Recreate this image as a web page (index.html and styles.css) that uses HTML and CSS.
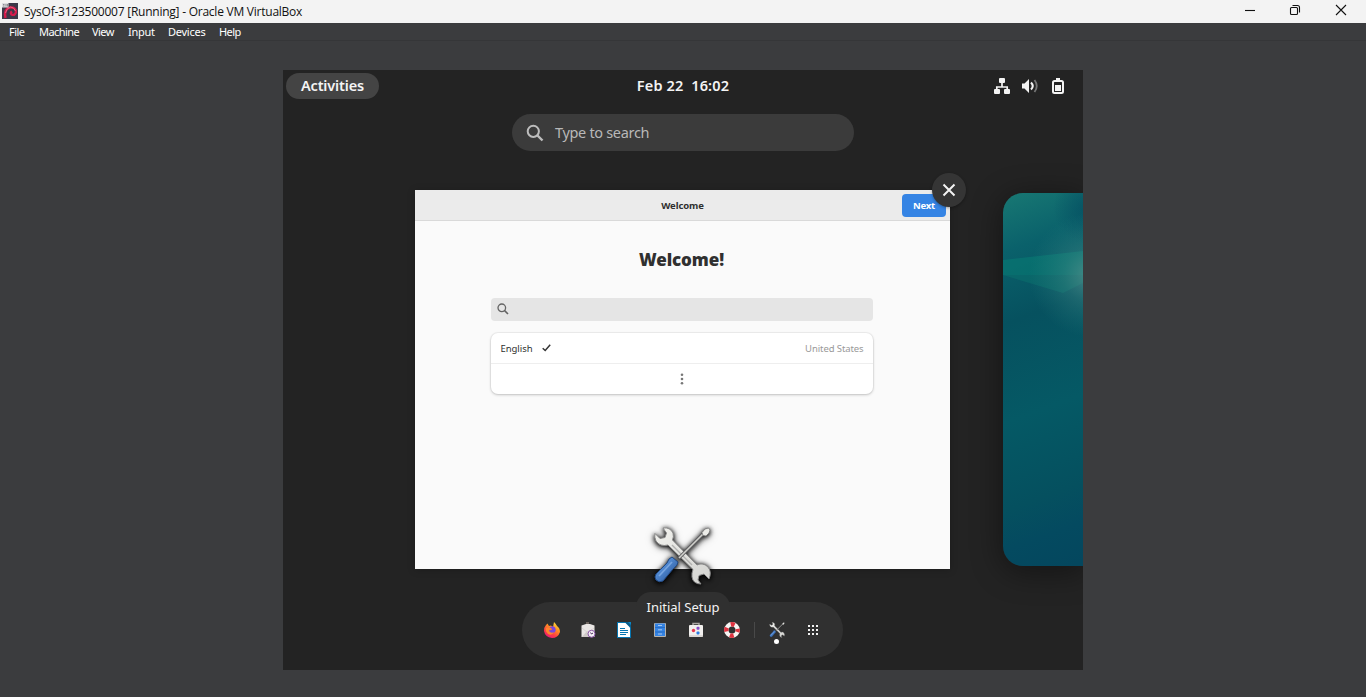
FILE: index.html
```html
<!DOCTYPE html>
<html lang="en">
<head>
<meta charset="utf-8">
<title>SysOf-3123500007 [Running] - Oracle VM VirtualBox</title>
<link rel="stylesheet" href="styles.css">
</head>
<body>
<svg width="0" height="0" class="defs">
  <defs>
    <linearGradient id="steel" x1="0" y1="0" x2="1" y2="1"><stop offset="0" stop-color="#f2f2ee"/><stop offset="1" stop-color="#d2d2cf"/></linearGradient>
    <linearGradient id="handle" x1="0" y1="0" x2="1" y2="1"><stop offset="0" stop-color="#3566ad"/><stop offset=".4" stop-color="#5088d0"/><stop offset="1" stop-color="#234c8c"/></linearGradient>
    <linearGradient id="fire" x1=".9" y1="0" x2=".3" y2="1"><stop offset="0" stop-color="#fff04a"/><stop offset=".4" stop-color="#ff9320"/><stop offset=".75" stop-color="#ff3b45"/><stop offset="1" stop-color="#e8187c"/></linearGradient>
    <symbol id="tools" viewBox="0 0 60 60">
      <path d="M3 7.500 L8 12.500 L13 11.500 L14.500 7 L11 2 Q18 1 21 7 Q22 11 20.500 14 L45 39 Q51 36 56 41 Q60 46 57 53 L52 48 L47 49.500 L46 54 L49 58 Q41 58 40 51 Q39.500 47 41 43.500 L16 19 Q8 21 4 15 Q2 11 3 7.500 Z" fill="url(#steel)" stroke="#8a8a8a" stroke-width="1"/>
      <path d="M20 19 L40 39" stroke="#b2b2b0" stroke-width="1.500"/>
      <path d="M27 32 L52 7" stroke="#5e5e60" stroke-width="3.200"/>
      <path d="M27 32 L52 7" stroke="#d0d0cc" stroke-width="1.600"/>
      <path d="M50 6.500 L53 3 L56.500 2 L58 4 L57 7 L54 10 L51 9.500 Z" fill="#ecece8" stroke="#777" stroke-width=".8"/>
      <path d="M4 48 L15 37 L17 33 L20 31 L26 36 L25 39 L21 43 L11 55 Q7 57 4 54 Q2 51 4 48 Z" fill="url(#handle)" stroke="#234a83" stroke-width="1"/>
      <path d="M7 50 L20 36" stroke="#78a5df" stroke-width="1.800"/>
    </symbol>
  </defs>
</svg>
<header class="titlebar">
  <svg class="app-icon" width="16" height="16" viewBox="0 0 16 16">
    <rect width="16" height="16" fill="#3c3849"/>
    <path d="M3.500 15 Q1.500 6 8 4.500 Q14 4 14 9 Q13 13 9.500 11.500 Q8 10 10 8.500" fill="none" stroke="#d5194b" stroke-width="2.400"/>
    <path d="M3.500 10 Q4 5.500 8.500 4 Q12 4 13.500 8" fill="none" stroke="#f0728e" stroke-width=".8"/>
    <rect width="6.500" height="4.500" fill="#dcdce0"/><path d="M1 1.500h1.500M1 3h1.500M4 1v2.500M5.500 1v2.500" stroke="#77777d" stroke-width=".8"/>
  </svg>
  <span class="title">SysOf-3123500007 [Running] - Oracle VM VirtualBox</span>
  <div class="controls">
    <svg width="12" height="12" viewBox="0 0 12 12"><path d="M1 6.500h10"/></svg>
    <svg width="12" height="12" viewBox="0 0 12 12"><rect x="1.500" y="3.500" width="7" height="7" rx="1"/><path d="M3.500 1.500h5q2 0 2 2v5"/></svg>
    <svg width="12" height="12" viewBox="0 0 12 12"><path d="M1 1l10 10M11 1L1 11"/></svg>
  </div>
</header>
<nav class="menubar"><span class="m-file">File</span><span class="m-machine">Machine</span><span class="m-view">View</span><span class="m-input">Input</span><span class="m-devices">Devices</span><span class="m-help">Help</span></nav>
<main class="viewport">
  <section class="desktop">
    <div class="topbar">
      <div class="activities"><span>Activities</span></div>
      <div class="clock"><span>Feb 22&nbsp; 16:02</span></div>
      <div class="status">
        <svg width="16" height="16" viewBox="0 0 16 16"><path d="M8 4v5M2.800 12V9h10.400v3" fill="none" stroke="#f4f4f4" stroke-width="1.700"/><rect x="5" y="0" width="6" height="5" rx="1"/><rect x="0" y="11" width="6" height="5" rx="1"/><rect x="10" y="11" width="6" height="5" rx="1"/></svg>
        <svg width="16" height="16" viewBox="0 0 16 16"><path d="M0 5.500h2.500L7 1v14L2.500 10.500H0z"/><path d="M9 4.500q3.500 3.500 0 7" fill="none" stroke="#f4f4f4" stroke-width="2"/><path d="M12.500 2q4.500 6 0 12" fill="none" stroke="#777" stroke-width="1.800"/></svg>
        <svg width="16" height="16" viewBox="0 0 16 16"><path d="M6 2V0h4v2" /><rect x="3" y="3" width="10" height="12" rx="1.500" fill="none" stroke="#f4f4f4" stroke-width="2"/><rect x="5" y="7" width="6" height="6"/></svg>
      </div>
    </div>
    <div class="search">
      <svg width="18" height="18" viewBox="0 0 18 18"><circle cx="7.300" cy="7.300" r="5.600" fill="none" stroke="#bdbdbd" stroke-width="2"/><path d="M11.500 11.500l5 5" stroke="#bdbdbd" stroke-width="2.400"/></svg>
      <span>Type to search</span>
    </div>
    <div class="overview">
      <article class="window">
        <div class="headerbar"><span class="head-title">Welcome</span><button class="next"><span>Next</span></button></div>
        <div class="content">
          <h1>Welcome!</h1>
          <div class="lang-search"><svg width="12" height="12" viewBox="0 0 12 12"><circle cx="4.800" cy="4.800" r="3.800" fill="none" stroke="#646464" stroke-width="1.300"/><path d="M7.600 7.600l3.400 3.400" stroke="#646464" stroke-width="1.600"/></svg></div>
          <div class="languages">
            <div class="row"><span class="lang">English</span><svg width="9" height="8" viewBox="0 0 9 8"><path d="M.7 4.200L3.200 6.500 8.200.8" fill="none" stroke="#333" stroke-width="1.500"/></svg><span class="country">United States</span></div>
            <div class="row more"><svg width="4" height="12" viewBox="0 0 4 12" fill="#777"><circle cx="2" cy="1.800" r="1.300"/><circle cx="2" cy="6" r="1.300"/><circle cx="2" cy="10.200" r="1.300"/></svg></div>
          </div>
        </div>
        <button class="close" aria-label="Close"><svg width="14" height="14" viewBox="0 0 14 14"><path d="M1.500 1.500l11 11M12.500 1.500l-11 11" stroke="#f4f4f4" stroke-width="2"/></svg></button>
        <svg class="tool-icon" width="60" height="60"><use href="#tools"/></svg>
      </article>
      <svg class="workspace" width="80" height="373" viewBox="0 0 80 373">
        <defs>
          <linearGradient id="sea" gradientUnits="userSpaceOnUse" x1="0" y1="0" x2="130" y2="350"><stop offset="0" stop-color="#187873"/><stop offset=".15" stop-color="#0a616b"/><stop offset=".33" stop-color="#06515f"/><stop offset=".58" stop-color="#055965"/><stop offset=".8" stop-color="#05505f"/><stop offset=".9" stop-color="#044a60"/><stop offset="1" stop-color="#04475e"/></linearGradient>
          <radialGradient id="glow" gradientUnits="userSpaceOnUse" cx="88" cy="82" r="62"><stop offset="0" stop-color="#6a9d96" stop-opacity=".65"/><stop offset=".45" stop-color="#4f9790" stop-opacity=".3"/><stop offset="1" stop-color="#338b86" stop-opacity="0"/></radialGradient>
          <radialGradient id="corner" gradientUnits="userSpaceOnUse" cx="85" cy="15" r="35"><stop offset="0" stop-color="#034b60" stop-opacity=".7"/><stop offset="1" stop-color="#034b60" stop-opacity="0"/></radialGradient>
        </defs>
        <rect width="80" height="373" fill="url(#sea)"/>
        <rect width="80" height="60" fill="url(#corner)"/>
        <path d="M0 67L80 58V82H0z" fill="#087d74" opacity=".55"/>
        <path d="M0 82H80V90L60 100z" fill="#0b766f" opacity=".45"/>
        <rect width="80" height="180" fill="url(#glow)"/>
      </svg>
    </div>
    <div class="dash">
      <svg width="16" height="16" viewBox="0 0 16 16"><path d="M2 3L3.500 1.500 5 4 7 3.500 9 5 10 0Q12 2 13 4Q16 6 16 10Q14 16 8 16Q1 15 0 9Q0 5 2 3z" fill="url(#fire)"/><path d="M5 6Q8 3 11 5.500Q13 9 9.500 11Q5 12 5 8Q8 9 8 7z" fill="#7847dd"/><path d="M2 6Q5 4 8 7Q5 7 5 9Q7 12 10 10Q8 14 4 12Q1 9 2 6z" fill="#ff852d"/></svg>
      <svg width="16" height="16" viewBox="0 0 16 16"><path d="M1.500 3.500L6 2h4l4.500 1.500V15h-13z" fill="#e9e6e4"/><path d="M6 2V0h3v2" fill="#6e6660"/><path d="M2 15L7 9l7 6z" fill="#cfcac7"/><path d="M2 6l6 5 6-5" fill="none" stroke="#d8d4d1"/><circle cx="11.500" cy="11.800" r="3.500" fill="#f4eff6" stroke="#8a55a5"/><path d="M10.500 10.500l1 1.500 1.500-1" fill="none" stroke="#4a3158"/></svg>
      <svg width="16" height="16" viewBox="0 0 16 16"><path d="M1 0h9l5 5v11H1z" fill="#0675b0"/><path d="M2 1h7.500L14 5.500V15H2z" fill="#fff"/><path d="M9 0h6v6z" fill="#0c5c88"/><path d="M12 0h3v3z" fill="#0b86c4"/><path d="M4 6.500h5M4 8.500h8M4 10.500h8M4 12.500h6" stroke="#0675b0"/></svg>
      <svg width="16" height="16" viewBox="0 0 16 16"><rect x="2" y="1" width="12" height="14" rx="1" fill="#b7b3ac"/><rect x="3" y="1.500" width="10" height="12.500" fill="#3584e4"/><path d="M3 5.500h10M3 10h10" stroke="#276cc5"/><path d="M6 3.500h4M6 7.800h4M6 12h4" stroke="#a8c8ee"/></svg>
      <svg width="16" height="16" viewBox="0 0 16 16"><path d="M5 4V1.500h6V4" fill="none" stroke="#aaa7a3" stroke-width="1.500"/><rect x="1" y="3" width="14" height="12" rx="1" fill="#f1efed"/><path d="M1 14h14" stroke="#c6c2be"/><circle cx="5.500" cy="8.500" r="1.700" fill="#e9374f"/><rect x="8.500" y="4.800" width="3" height="3" rx="1" fill="#8950c7"/><rect x="8.500" y="9.500" width="3" height="3" rx="1" fill="#2c7ee4"/></svg>
      <svg width="16" height="16" viewBox="0 0 16 16"><circle cx="8" cy="8" r="5.700" fill="none" stroke="#f7f4f2" stroke-width="4.400"/><circle cx="8" cy="8" r="5.700" fill="none" stroke="#df3340" stroke-width="4.400" stroke-dasharray="4 4.950" stroke-dashoffset="2"/></svg>
      <i class="divider"></i>
      <div class="running"><svg width="16" height="16"><use href="#tools"/></svg><i></i></div>
      <svg width="16" height="16" viewBox="0 0 16 16" fill="#f0f0f0"><path d="M3 3h2v2H3zM7 3h2v2H7zM11 3h2v2h-2zM3 7h2v2H3zM7 7h2v2H7zM11 7h2v2h-2zM3 11h2v2H3zM7 11h2v2H7zM11 11h2v2h-2z"/></svg>
      <div class="caption"><span>Initial Setup</span></div>
    </div>
  </section>
</main>
</body>
</html>
```
FILE: styles.css
```css
* { box-sizing: border-box; }
body { margin: 0; height: 697px; overflow: hidden; display: flex; flex-direction: column; background: #3b3c3e; font-family: "Noto Sans", "Open Sans", sans-serif; }
span { white-space: nowrap; }
svg { display: block; flex: none; }
button { border: 0; padding: 0; font-family: inherit; }
.defs { position: absolute; }
.titlebar { height: 23px; flex: none; display: flex; align-items: center; background: #f3f3f3; color: #111; padding: 0 19px 0 2px; }
.app-icon { margin-top: -1px; }
.title { margin-left: 6px; font: 12px/20px "Open Sans", sans-serif; letter-spacing: -.24px; }
.controls { margin-left: auto; display: flex; gap: 34px; margin-top: -3px; }
.controls svg { fill: none; stroke: #111; stroke-width: 1.1; }
.controls svg:first-child { margin-right: -1px; }
.menubar { height: 18px; flex: none; display: flex; gap: 13px; padding-left: 9px; border-bottom: 1px solid #353638; color: #fff; font: 11px/18px "Noto Sans", sans-serif; letter-spacing: -.55px; }
.m-file { width: 17px; }
.m-machine { width: 40px; }
.m-view { width: 23px; }
.m-input { width: 27px; letter-spacing: -.25px; }
.m-devices { width: 38px; letter-spacing: -.25px; }
.viewport { flex: 1; display: flex; justify-content: center; align-items: flex-start; padding-top: 29px; }
.desktop { width: 800px; height: 600px; background: #232323; overflow: hidden; display: flex; flex-direction: column; align-items: center; }
.topbar { width: 100%; height: 32px; display: grid; grid-template-columns: 1fr auto 1fr; align-items: center; padding: 0 17px 0 3px; color: #f4f4f4; font-size: 14.500px; font-weight: 600; }
.activities { width: 93px; height: 26px; border-radius: 13px; background: #444; display: flex; align-items: center; justify-content: center; padding-bottom: 2px; letter-spacing: -.15px; }
.clock { padding: 0 0 2px 14px; letter-spacing: .14px; }
.status { display: flex; gap: 12px; justify-content: flex-end; fill: #f4f4f4; }
.search { width: 342px; height: 37px; flex: none; margin-top: 12px; border-radius: 19px; background: #3b3b3b; display: flex; align-items: center; padding-left: 14px; gap: 11px; color: #b8b8b8; font-size: 14.500px; letter-spacing: -.32px; }
.search span { padding-bottom: 2px; }
.overview { width: 100%; height: 379px; flex: none; margin-top: 39px; display: flex; padding-left: 132px; gap: 53px; }
.window { position: relative; width: 535px; height: 379px; flex: none; background: #fafafa; color: #303030; box-shadow: 0 1px 8px #0003; }
.headerbar { height: 31px; background: #ebebeb; border-bottom: 1px solid #d9d9d9; display: grid; grid-template-columns: 1fr auto 1fr; align-items: center; padding: 0 4px; }
.head-title { grid-column: 2; font-size: 9.500px; font-weight: 700; letter-spacing: -.1px; }
.next { justify-self: end; width: 44px; height: 23px; border-radius: 4px; background: #3584e4; color: #fff; font-size: 9.500px; font-weight: 700; letter-spacing: -.2px; }
.content { display: flex; flex-direction: column; align-items: center; padding-right: 2px; }
h1 { margin: 26px 0 25px; font-size: 17px; line-height: 26px; font-weight: 900; letter-spacing: -.1px; }
.lang-search { width: 382px; height: 23px; border-radius: 4px; background: #e5e5e5; display: flex; align-items: center; padding-left: 6px; }
.lang-search svg { margin-top: -1px; }
.languages { width: 382px; margin-top: 12px; border-radius: 7px; background: #fff; box-shadow: 0 0 0 1px #0000000a, 0 1px 3px #0003; }
.row { height: 30px; display: flex; align-items: center; padding: 0 9px 0 10px; font-size: 9.500px; }
.lang { letter-spacing: -.05px; }
.row svg { margin-left: 10px; }
.country { margin-left: auto; color: #999; letter-spacing: -.1px; }
.more { height: 31px; justify-content: center; border-top: 1px solid #eee; }
.more svg { margin: 0; }
.close { position: absolute; left: 517px; top: -17px; width: 34px; height: 34px; border-radius: 50%; background: #353535; display: grid; place-items: center; box-shadow: 0 1px 3px #0005; }
.tool-icon { position: absolute; left: 237px; top: 336px; filter: drop-shadow(0 1px 2px #000) drop-shadow(0 1px 3px #0008); }
.workspace { margin-top: 3px; border-radius: 20px 0 0 20px; box-shadow: 0 5px 30px 2px #0006; }
.dash { position: relative; width: 321px; height: 56px; flex: none; align-self: flex-start; margin: 33px 0 0 239px; border-radius: 28px; background: #303030; display: flex; align-items: center; padding-left: 22px; gap: 20px; }
.divider { width: 1px; height: 16px; background: #494949; margin: 0 -6px 0 -6px; }
.running { position: relative; }
.running i { position: absolute; left: 5px; top: 17px; width: 5px; height: 5px; border-radius: 50%; background: #fff; }
.caption { position: absolute; left: 114px; top: -10px; width: 94px; height: 29px; border-radius: 15px 15px 0 0; background: #303030; color: #f4f4f4; display: flex; justify-content: center; font-size: 13px; line-height: 30px; }
```
